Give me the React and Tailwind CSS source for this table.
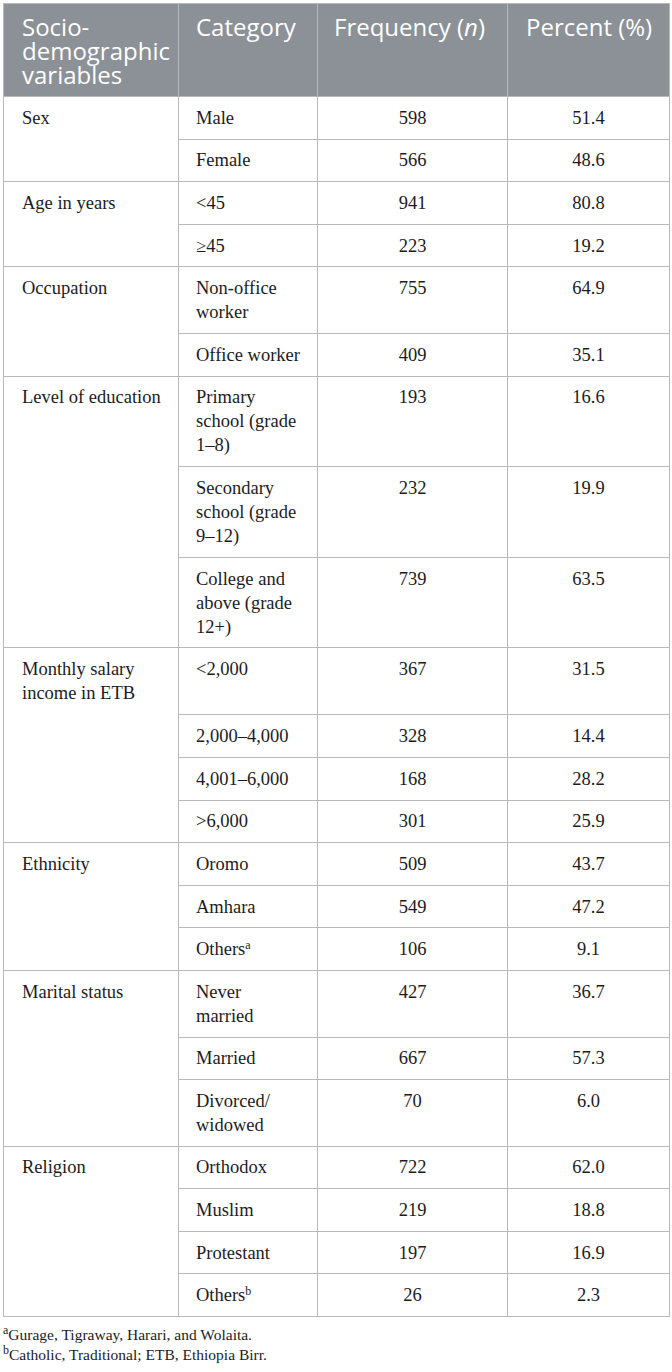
const groups = [
  { label: ["Sex"], rows: [[["Male"], "598", "51.4"], [["Female"], "566", "48.6"]] },
  { label: ["Age in years"], rows: [[["<45"], "941", "80.8"], [["≥45"], "223", "19.2"]] },
  {
    label: ["Occupation"],
    rows: [
      [["Non-office", "worker"], "755", "64.9"],
      [["Office worker"], "409", "35.1"],
    ],
  },
  {
    label: ["Level of education"],
    rows: [
      [["Primary", "school (grade", "1–8)"], "193", "16.6"],
      [["Secondary", "school (grade", "9–12)"], "232", "19.9"],
      [["College and", "above (grade", "12+)"], "739", "63.5"],
    ],
  },
  {
    label: ["Monthly salary", "income in ETB"],
    tall: true,
    rows: [
      [["<2,000"], "367", "31.5"],
      [["2,000–4,000"], "328", "14.4"],
      [["4,001–6,000"], "168", "28.2"],
      [[">6,000"], "301", "25.9"],
    ],
  },
  {
    label: ["Ethnicity"],
    rows: [
      [["Oromo"], "509", "43.7"],
      [["Amhara"], "549", "47.2"],
      [["Others"], "106", "9.1", "a"],
    ],
  },
  {
    label: ["Marital status"],
    rows: [
      [["Never", "married"], "427", "36.7"],
      [["Married"], "667", "57.3"],
      [["Divorced/", "widowed"], "70", "6.0"],
    ],
  },
  {
    label: ["Religion"],
    rows: [
      [["Orthodox"], "722", "62.0"],
      [["Muslim"], "219", "18.8"],
      [["Protestant"], "197", "16.9"],
      [["Others"], "26", "2.3", "b"],
    ],
  },
];

function Lines({ parts, sup }) {
  return parts.map((p, i) => (
    <span key={i}>
      {i > 0 && <br />}
      {p}
      {sup && i === parts.length - 1 && <sup className="text-[12px] leading-none">{sup}</sup>}
    </span>
  ));
}

const cell = "border border-[#b9b9b9] pt-[8.8px] pb-[8.8px] leading-[24px] align-top";
const head = "border border-[#b9b9b9] font-normal pt-[11px] pb-[9px] leading-[24px] align-top";

export default function App() {
  return (
    <div className="bg-white min-h-[1372px] pt-[3px] pl-[3px] text-[#1c1c1c] font-[Liberation_Serif]">
      <table className="w-[666px] border-collapse table-fixed text-[18.5px] font-[Liberation_Serif]">
        <colgroup>
          <col className="w-[175px]" />
          <col className="w-[139px]" />
          <col className="w-[190px]" />
          <col className="w-[162px]" />
        </colgroup>
        <thead>
          <tr className="bg-[#8b9196] text-white font-[Open_Sans] text-[24px] text-left">
            <th className={`${head} pl-[18px] pr-1`}>
              Socio-
              <br />
              demographic
              <br />
              variables
            </th>
            <th className={`${head} pl-[17px]`}>Category</th>
            <th className={`${head} pl-[16px]`}>
              Frequency (<i>n</i>)
            </th>
            <th className={`${head} pl-[18px]`}>Percent (%)</th>
          </tr>
        </thead>
        <tbody>
          {groups.map((g) =>
            g.rows.map((r, i) => (
              <tr key={g.label[0] + i} className={g.tall && i === 0 ? "h-[67px]" : ""}>
                {i === 0 && (
                  <td rowSpan={g.rows.length} className={`${cell} pl-[18px]`}>
                    <Lines parts={g.label} />
                  </td>
                )}
                <td className={`${cell} pl-[17px]`}>
                  <Lines parts={r[0]} sup={r[3]} />
                </td>
                <td className={`${cell} text-center`}>{r[1]}</td>
                <td className={`${cell} text-center`}>{r[2]}</td>
              </tr>
            ))
          )}
        </tbody>
      </table>
      <div className="mt-[8px] text-[15.5px] leading-[20px]">
        <p>
          <sup className="text-[12px] leading-none">a</sup>Gurage, Tigraway, Harari, and Wolaita.
        </p>
        <p>
          <sup className="text-[12px] leading-none">b</sup>Catholic, Traditional; ETB, Ethiopia Birr.
        </p>
      </div>
    </div>
  );
}
